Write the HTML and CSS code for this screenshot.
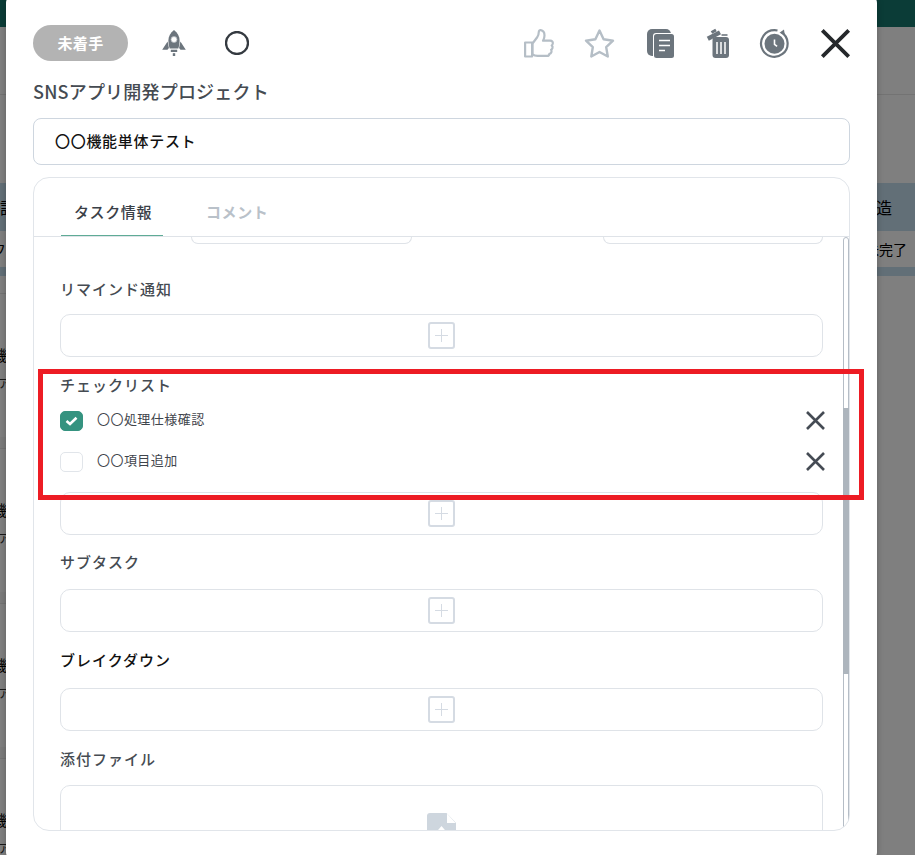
FILE: index.html
```html
<!DOCTYPE html>
<html lang="ja">
<head>
<meta charset="utf-8">
<title>タスク詳細</title>
<link rel="stylesheet" href="styles.css">
</head>
<body>
<div class="page">
  <div class="page-header"></div>
  <div class="page-sub"></div>
  <div class="page-gap"></div>
  <div class="page-band"><span class="cut-l">設</span><span>製造</span></div>
  <div class="page-row"><span class="cut-l small">フ</span><span class="small">未完了</span></div>
  <div class="page-band thin"></div>
  <div class="page-spacer"></div>
  <div class="task-row"><span class="name">機</span><span class="sub">ア</span></div>
  <div class="task-row"><span class="name">機</span><span class="sub">ア</span></div>
  <div class="task-row"><span class="name">機</span><span class="sub">ア</span></div>
  <div class="task-row"><span class="name">機</span><span class="sub">ア</span></div>
</div>
<div class="overlay"></div>

<section class="modal">
  <header class="toolbar">
    <span class="pill">未着手</span>
    <svg class="rocket" width="24" height="26" viewBox="0 0 24 26">
      <path fill="#6c757d" d="M12 0c3.6 2.6 5.6 6.4 5.6 10.6 0 2.800-.5 5.600-1.300 8H7.700c-.8-2.400-1.300-5.200-1.300-8C6.400 6.400 8.400 2.600 12 0z"/>
      <path fill="#6c757d" d="M5.600 11.500 0.200 19.800h5.300l1.400-1.800zM18.400 11.500l5.400 8.300h-5.300l-1.400-1.800z"/>
      <rect x="8.800" y="19.700" width="6.400" height="2.300" fill="#6c757d"/>
      <rect x="10.800" y="23.200" width="2.400" height="2.800" fill="#6c757d"/>
      <circle cx="12" cy="9.500" r="3" fill="#fff" stroke="#aeb4ba" stroke-width="0.800"/>
    </svg>
    <svg class="ring" width="24" height="24" viewBox="0 0 24 24"><circle cx="12" cy="12" r="11" fill="none" stroke="#343a40" stroke-width="2.300"/></svg>
    <div class="actions">
      <svg width="30" height="29" viewBox="-1 0 30 29" fill="none" stroke="#b5bec6" stroke-width="2.200" stroke-linejoin="round">
        <rect x="1.100" y="13.500" width="7" height="14"/>
        <path d="M8.500 14.500 13 8.500c1.400-2 1.800-3.600 1.800-5.500 0-1.400.8-2 1.900-1.900 2.400.3 3.800 2.500 3.800 5.400 0 2-.6 3.700-1.500 5.200h7.300c1.700 0 2.800 1.200 2.500 2.800-.1.900-.6 1.600-1.100 1.900.8.700 1.100 1.600.8 2.600-.2.800-.8 1.500-1.400 1.700.5.700.6 1.600.3 2.400-.3 1-1.100 1.600-2 1.700-.1 1.300-1.100 2.100-2.300 2.100H13.500c-2 0-3.700-.6-5-1.600z"/>
      </svg>
      <svg width="29" height="29" viewBox="0 0 29 29" fill="none" stroke="#b5bec6" stroke-width="2.400" stroke-linejoin="round">
        <polygon points="14.500,1.500 18.600,10.300 28,11.700 21.200,18.200 22.800,27.500 14.500,23 6.300,27.500 7.800,18.200 1,11.700 10.400,10.300"/>
      </svg>
      <svg width="27" height="29" viewBox="-1 0 27 29">
        <rect x="0" y="0" width="24" height="27" rx="5" fill="#6c757d"/>
        <rect x="6" y="4" width="22" height="26" rx="3" fill="#fff"/>
        <rect x="7" y="5" width="20" height="24" rx="2.500" fill="#6c757d"/>
        <path stroke="#fff" stroke-width="1.500" d="M12 11.500h11M12 16.500h11M12 21.500h6"/>
      </svg>
      <svg width="23" height="29" viewBox="-2 0 23 29">
        <rect x="5.500" y="8" width="16.500" height="21" rx="3" fill="#6c757d"/>
        <path stroke="#fff" stroke-width="1.500" d="M10 13v12M14 13v12M18 13v12"/>
        <path stroke="#6c757d" stroke-width="4.400" d="M0.800 9.800 13 3.400"/>
        <path stroke="#6c757d" stroke-width="3" d="M4.500 3.500 9 1"/>
        <path stroke="#6c757d" stroke-width="1.600" d="M14.500 6h6"/>
      </svg>
      <svg width="29" height="29" viewBox="0 0 29 29">
        <path fill="none" stroke="#6c757d" stroke-width="2.200" d="M21.500 3.300A13.300 13.300 0 1 1 14.500 1.200a13 13 0 0 1 3 .3"/>
        <path fill="#6c757d" d="M19.500 3.800 24 0.500l.8 5.500z"/>
        <circle cx="14.500" cy="14.800" r="10" fill="#6c757d"/>
        <path fill="none" stroke="#fff" stroke-width="1.600" d="M14.500 10.500v4.800l2.600 2"/>
      </svg>
      <svg width="29" height="29" viewBox="0 0 29 29"><path stroke="#25282b" stroke-width="3.800" d="M1.300 1.300 27.700 27.700M27.700 1.300 1.300 27.700"/></svg>
    </div>
  </header>

  <h1 class="project">SNSアプリ開発プロジェクト</h1>
  <div class="title-field">〇〇機能単体テスト</div>

  <div class="card">
    <nav class="tabs">
      <span class="tab active">タスク情報</span>
      <span class="tab">コメント</span>
    </nav>
    <div class="scroll">
      <div class="content">
        <div class="stubs"><span class="stub first"></span><span class="stub second"></span></div>

        <h2 class="label reminder">リマインド通知</h2>
        <div class="add-box gap-12"><span class="plus"></span></div>

        <h2 class="label gap-17">チェックリスト</h2>
        <ul class="checks">
          <li class="check">
            <span class="box on"><svg width="13" height="10" viewBox="0 0 13 10"><path fill="none" stroke="#fff" stroke-width="2.600" d="M1.500 5 5 8 11.500 1.800"/></svg></span>
            <span class="check-text">〇〇処理仕様確認</span>
            <svg class="del" width="19" height="19" viewBox="0 0 19 19"><path stroke="#454b54" stroke-width="2.600" d="M1 1 18 18M18 1 1 18"/></svg>
          </li>
          <li class="check">
            <span class="box"></span>
            <span class="check-text">〇〇項目追加</span>
            <svg class="del" width="19" height="19" viewBox="0 0 19 19"><path stroke="#454b54" stroke-width="2.600" d="M1 1 18 18M18 1 1 18"/></svg>
          </li>
        </ul>
        <div class="add-box gap-10"><span class="plus"></span></div>

        <h2 class="label gap-16">サブタスク</h2>
        <div class="add-box gap-14"><span class="plus"></span></div>

        <h2 class="label strong gap-17">ブレイクダウン</h2>
        <div class="add-box gap-15"><span class="plus"></span></div>

        <h2 class="label gap-17">添付ファイル</h2>
        <div class="drop-box">
          <svg width="29" height="38" viewBox="0 0 29 38">
            <path fill="#ced6de" d="M3 0h16.500L29 10v25a3 3 0 0 1-3 3H3a3 3 0 0 1-3-3V3a3 3 0 0 1 3-3z"/>
            <path fill="#fff" d="M20 0.500 28.500 10H20z"/>
            <path fill="#fff" d="M14.500 13 20.500 20h-4v8h-4v-8h-4z"/>
          </svg>
        </div>
      </div>
      <div class="track"><div class="thumb"></div></div>
    </div>
  </div>
</section>

<div class="highlight"></div>
</body>
</html>
```

FILE: styles.css
```css
* { box-sizing: border-box; }
html, body { margin: 0; height: 855px; overflow: hidden; }
body {
  position: relative;
  background: #fff;
  font-family: "Noto Sans CJK JP", "Noto Sans", sans-serif;
  color: #000;
}

/* page behind the dialog */
.page { height: 855px; overflow: hidden; }
.page-header { height: 27px; background: #16796f; }
.page-sub { height: 68px; border-bottom: 1px solid #e6e6e6; }
.page-gap { height: 88px; }
.page-band {
  height: 48px;
  background: #c4deef;
  display: flex;
  justify-content: space-between;
  align-items: center;
  padding-right: 23px;
  font-size: 16px;
  line-height: 1;
}
.page-band.thin { height: 9px; padding: 0; }
.page-row {
  height: 36px;
  display: flex;
  justify-content: space-between;
  align-items: center;
  padding-right: 8px;
}
.small { font-size: 14px; line-height: 1; }
.cut-l.small { margin-left: -8px; }
.page-spacer { width: 100px; height: 18px; border-bottom: 1px solid #e6e6e6; }
.task-row {
  width: 100px;
  height: 155px;
  padding-top: 53px;
  background: linear-gradient(#fff 143px, #f6f6f6 143px);
  border-bottom: 1px solid #e6e6e6;
  line-height: 1;
}
.name, .sub { display: block; margin-left: -8px; }
.name { font-size: 15px; }
.sub { font-size: 12px; margin-top: 15px; margin-left: -2px; color: #333; }

.overlay { position: absolute; inset: 0; background: rgba(0, 0, 0, .5); }

/* dialog */
.modal {
  position: absolute;
  left: 6px;
  top: -5px;
  width: 871px;
  height: 865px;
  padding: 30px 27px 0;
  background: #fff;
  border-radius: 8px;
  box-shadow: 0 0 6px rgba(0, 0, 0, .25);
}
.toolbar { display: flex; align-items: center; height: 36px; }
.pill {
  width: 95px;
  height: 36px;
  border-radius: 18px;
  background: #b3b3b3;
  color: #fff;
  font-size: 15px;
  font-weight: 700;
  line-height: 35px;
  letter-spacing: .3px;
  text-align: center;
}
.rocket { margin-left: 34px; }
.ring { margin-left: 39px; }
.actions { margin-left: auto; display: flex; gap: 32px; align-items: center; }
.actions svg { display: block; overflow: visible; }

.project {
  margin: 18px 0 15px;
  font-size: 18px;
  font-weight: 500;
  line-height: 24px;
  letter-spacing: .2px;
  color: #454b52;
}
.title-field {
  height: 47px;
  padding-left: 21px;
  border: 1px solid #ced6df;
  border-radius: 8px;
  font-size: 15px;
  font-weight: 500;
  line-height: 43px;
  letter-spacing: .7px;
  color: #111;
}

.card {
  height: 654px;
  margin-top: 12px;
  border: 1px solid #e1e5ea;
  border-radius: 16px;
  overflow: hidden;
}
.tabs {
  display: flex;
  height: 59px;
  padding-left: 27px;
  border-bottom: 1px solid #dfe3e8;
}
.tab {
  width: 102px;
  margin-right: 43px;
  height: 58px;
  padding-top: 22px;
  font-size: 15px;
  font-weight: 700;
  line-height: 24px;
  letter-spacing: .6px;
  color: #b9c1c9;
}
.tab.active {
  padding-left: 13px;
  font-weight: 500;
  color: #3a4047;
  border-bottom: 1px solid #5fab96;
}
.tab:last-child { width: 70px; margin-right: 0; }

.scroll { display: flex; height: 593px; }
.content { flex: 1; min-width: 0; padding: 0 20px 0 26px; }
.track {
  width: 6px;
  height: 593px;
  border: 1px solid #b5bdc6;
  border-radius: 3px 3px 0 0;
  flex: none;
}
.thumb { margin: 170px -1px 0; height: 266px; background: #adb5bd; }

.stubs { display: flex; height: 7px; }
.stub {
  display: block;
  width: 221px;
  height: 7px;
  border: 1px solid #dfe3e8;
  border-top: 0;
  border-radius: 0 0 10px 10px;
}
.stub.first { margin-left: 131px; }
.stub.second { margin-left: auto; width: 220px; }

.label {
  height: 24px;
  margin: 0;
  font-size: 15px;
  font-weight: 500;
  line-height: 22px;
  letter-spacing: 1px;
  color: #454b52;
}
.label.strong { color: #111; }
.reminder { margin-top: 34px; }
.gap-10 { margin-top: 10px; }
.gap-12 { margin-top: 12px; }
.gap-14 { margin-top: 14px; }
.gap-15 { margin-top: 15px; }
.gap-16 { margin-top: 16px; }
.gap-17 { margin-top: 17px; }

.add-box {
  height: 43px;
  display: flex;
  align-items: center;
  justify-content: center;
  border: 1px solid #dfe3e8;
  border-radius: 10px;
}
.plus {
  position: relative;
  width: 27px;
  height: 27px;
  border: 2px solid #d5dbe3;
  border-radius: 3px;
}
.plus::before, .plus::after {
  content: "";
  position: absolute;
  background: #d5dbe3;
}
.plus::before { left: 5px; right: 5px; top: 11px; height: 1px; }
.plus::after { top: 5px; bottom: 5px; left: 11px; width: 1px; }

.checks {
  list-style: none;
  margin: 3px 0 0;
  padding: 0;
  display: flex;
  flex-direction: column;
  gap: 1px;
}
.check { display: flex; align-items: center; height: 40px; }
.box {
  display: flex;
  align-items: center;
  justify-content: center;
  width: 23px;
  height: 20px;
  border: 1px solid #e1e5ea;
  border-radius: 5px;
}
.box.on { background: #359380; border-color: #359380; }
.check-text {
  margin: 0 0 4px 14px;
  font-size: 13px;
  line-height: 20px;
  letter-spacing: .45px;
  color: #3f454c;
}
.del { margin: 0 -2px 1px auto; }

.drop-box {
  height: 100px;
  margin-top: 13px;
  padding-top: 27px;
  display: flex;
  justify-content: center;
  align-items: flex-start;
  border: 1px solid #dfe3e8;
  border-radius: 10px;
}

/* annotation drawn over the screenshot */
.highlight {
  position: absolute;
  left: 38px;
  top: 369px;
  width: 826px;
  height: 131px;
  border: 5px solid #ed1c24;
}
```
